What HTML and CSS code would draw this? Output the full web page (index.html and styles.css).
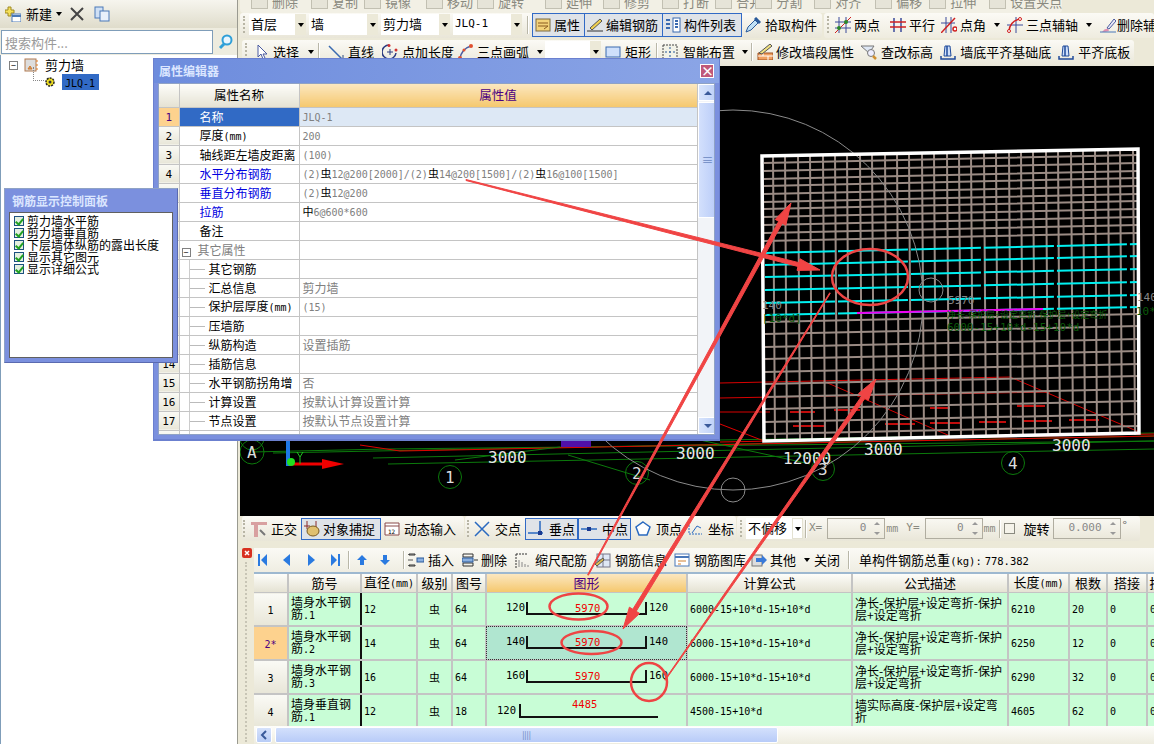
FILE: index.html
```html
<!DOCTYPE html>
<html lang="zh">
<head>
<meta charset="utf-8">
<title>属性编辑器</title>
<link rel="stylesheet" href="styles.css">
</head>
<body>
<div class="app">
  <aside class="left">
    <div class="ltool">
      <svg class="ic" viewBox="0 0 16 16"><path d="M3 1h3v3h3v3H6v3H3V7H0V4h3z" fill="#f5e05a" stroke="#a08a20"/><rect x="7" y="8" width="9" height="8" fill="#fff" stroke="#4a78b8"/><path d="M7 10h9" stroke="#4a78b8" stroke-width="2"/></svg>
      <span class="t new">新建</span><i class="ct"></i>
      <svg class="ic xx" viewBox="0 0 16 16"><path d="M2 2l12 12M14 2L2 14" stroke="#444" stroke-width="2"/></svg>
      <svg class="ic cp" viewBox="0 0 16 16"><rect x="1" y="1" width="8" height="11" fill="#cfe0f5" stroke="#4a78b8"/><rect x="6" y="5" width="9" height="10" fill="#e8f0fb" stroke="#4a78b8"/></svg>
    </div>
    <div class="lsearch">
      <div class="sbox">搜索构件...</div>
      <svg class="ic sico" viewBox="0 0 16 16"><circle cx="9" cy="6" r="4.5" fill="#e8f6ff" stroke="#2f9fd8" stroke-width="2"/><path d="M6 10l-4 4" stroke="#2f9fd8" stroke-width="3"/></svg>
    </div>
    <div class="tree">
      <div class="node">
        <span class="minus">−</span>
        <svg class="ic" viewBox="0 0 16 16"><rect x="1" y="2" width="11" height="12" fill="#ddd" stroke="#b07a50"/><path d="M4 12l2-3 2 3zM13 3v2M13 7v2M13 11v2" stroke="#e07a20" fill="#999"/></svg>
        <span class="nt">剪力墙</span>
      </div>
      <div class="node sub">
        <span class="conn"></span>
        <svg class="ic gear" viewBox="0 0 12 12"><circle cx="6" cy="6" r="4" fill="#f0e020" stroke="#222" stroke-width="1.5" stroke-dasharray="2 1"/><circle cx="6" cy="6" r="1.5" fill="#333"/></svg>
        <span class="sel"><span class="m">JLQ-1</span></span>
      </div>
    </div>
  </aside>

  <main class="right">
    <div class="r0">
      <div class="r0in">
        <span class="dt d1">删除</span><span class="dt d2">复制</span><span class="dt d3">镜像</span><span class="dt d4">移动</span><span class="dt d5">旋转</span><span class="dt d6">延伸</span><span class="dt d7">修剪</span><span class="dt d8">打断</span><span class="dt d9">合并</span><span class="dt d10">分割</span><span class="dt d11">对齐</span><span class="dt d12">偏移</span><span class="dt d13">拉伸</span><span class="dt d14">设置夹点</span>
      </div>
    </div>

    <div class="r1">
      <div class="tb tb1">
        <i class="gr"></i>
        <div class="cb w57">首层<b><i class="ct"></i></b></div>
        <div class="cb w69">墙<b><i class="ct"></i></b></div>
        <div class="cb w69">剪力墙<b><i class="ct"></i></b></div>
        <div class="cb w69"><span class="m big">JLQ-1</span><b><i class="ct"></i></b></div>
        <i class="sep s1"></i>
        <div class="on b1"><svg class="ic" viewBox="0 0 16 16"><rect x="1" y="2" width="14" height="12" fill="#f3d27a" stroke="#7a6a40"/><path d="M3 6h10M3 9h10M9 12l4-3" stroke="#8a5a20"/></svg><span class="t">属性</span></div>
        <div class="on b2"><svg class="ic" viewBox="0 0 16 16"><path d="M3 11L13 2l2 2L5 13z" fill="#f0d050" stroke="#555"/><path d="M0 14h16" stroke="#333"/></svg><span class="t">编辑钢筋</span></div>
        <div class="on b3"><svg class="ic" viewBox="0 0 16 16"><rect x="8" y="1" width="7" height="14" fill="#fff" stroke="#3a6ab0"/><path d="M10 4h3M10 7h3M10 10h3M1 3h4M1 7h4M1 11h4" stroke="#3a6ab0" stroke-width="2" fill="none"/></svg><span class="t">构件列表</span></div>
        <div class="it pick"><svg class="ic" viewBox="0 0 16 16"><path d="M1 15l2-5 7-7 3 3-7 7z" fill="#bfe0f5" stroke="#2a5a9a"/><path d="M10 1l5 5" stroke="#2a5a9a" stroke-width="3"/></svg><span class="t">拾取构件</span></div>
      </div>
      <div class="tb tb2">
        <i class="gr"></i>
        <div class="it it-a"><svg class="ic" viewBox="0 0 16 16"><path d="M4 0v16M11 0v16M0 5h16M0 11h16" stroke="#3a4a9a"/><path d="M0 16L16 0" stroke="#d02020"/><circle cx="11" cy="5" r="2" fill="#2a8a2a"/><circle cx="4" cy="11" r="2" fill="#2a8a2a"/></svg><span class="t">两点</span></div>
        <div class="it it-b"><svg class="ic" viewBox="0 0 16 16"><path d="M4 1v14M11 1v14" stroke="#3a4a9a" stroke-width="1.5"/><path d="M0 5h16M0 10h16" stroke="#d02020" stroke-width="1.5"/></svg><span class="t">平行</span></div>
        <div class="it it-c"><svg class="ic" viewBox="0 0 16 16"><path d="M5 0v16M10 0v16M0 6h14" stroke="#3a4a9a"/><path d="M0 16L14 1" stroke="#d02020" stroke-width="1.5"/><circle cx="14" cy="12" r="2" fill="#fff" stroke="#d02020" stroke-width="1.5"/></svg><span class="t">点角</span><i class="ct"></i></div>
        <div class="it it-d"><svg class="ic" viewBox="0 0 16 16"><path d="M9 0v16M0 8h16" stroke="#3a4a9a"/><path d="M2 14Q3 4 13 2" stroke="#d02020" fill="none" stroke-width="1.5"/><circle cx="2" cy="14" r="1.5" fill="#fff" stroke="#d02020"/><circle cx="13" cy="2" r="1.5" fill="#fff" stroke="#d02020"/></svg><span class="t">三点辅轴</span><i class="ct"></i></div>
        <div class="it it-e"><svg class="ic" viewBox="0 0 16 16"><path d="M7 11L14 2l2 2-7 8z" fill="#e8e8f5" stroke="#4a5aa0"/><path d="M2 15q3-4 6-3l1 2q-3 1-7 1z" fill="#e090b0"/><path d="M0 15h16" stroke="#4a78b8"/></svg><span class="t">删除辅轴</span></div>
      </div>
    </div>

    <div class="r2">
      <div class="tb tb3">
        <i class="gr"></i>
        <div class="it i-sel"><svg class="ic" viewBox="0 0 16 16"><path d="M5 1v12l3-3 2 5 2-1-2-4h4z" fill="#fff" stroke="#4a5aa0"/></svg><span class="t">选择</span><i class="ct ct5"></i></div>
        <i class="sep s2"></i>
        <div class="it"><svg class="ic" viewBox="0 0 16 16"><path d="M1 2l13 13" stroke="#3a6ab0" stroke-width="1.5"/><path d="M11 15h4v-4" stroke="#2a4a80" fill="none"/></svg><span class="t">直线</span></div>
        <div class="it i-8"><svg class="ic" viewBox="0 0 16 16"><path d="M7 1a7 7 0 1 0 7 8" stroke="#2a3a80" fill="none" stroke-width="1.5"/><path d="M5 8h6M8 5v6" stroke="#2a3a80"/><circle cx="14" cy="6" r="1.5" fill="#d03030"/><circle cx="7" cy="1.5" r="1.5" fill="#d03030"/></svg><span class="t">点加长度</span></div>
        <div class="it i-3"><svg class="ic" viewBox="0 0 16 16"><path d="M2 15Q3 5 13 2" stroke="#4a5aa0" fill="none" stroke-width="1.5"/><circle cx="2" cy="14" r="2" fill="#e05030"/><circle cx="6" cy="6" r="1.5" fill="#e05030"/><circle cx="13" cy="2" r="2" fill="#e05030"/></svg><span class="t">三点画弧</span><i class="ct ct5"></i></div>
        <div class="cb w56 cbw"><b><i class="ct"></i></b></div>
        <div class="it i-4"><svg class="ic" viewBox="0 0 16 16"><rect x="1" y="3" width="14" height="10" fill="#cfe0fb" stroke="#3a6ab0"/></svg><span class="t">矩形</span></div>
        <i class="sep s3"></i>
        <div class="it i-5 i-gap5"><svg class="ic" viewBox="0 0 16 16"><rect x="1" y="1" width="14" height="14" fill="#f2f2e8" stroke="#444" stroke-dasharray="2 1"/><path d="M8 3v10M3 8h10" stroke="#2a5a9a" stroke-dasharray="2 2"/></svg><span class="t">智能布置</span><i class="ct ct2"></i></div>
        <i class="sep s4"></i>
        <div class="it i-gap3"><svg class="ic" viewBox="0 0 16 16"><path d="M1 9h15v7H1z" fill="#f0a060" stroke="#a05020"/><path d="M1 12h15M6 9v3M11 12v4" stroke="#fff"/><path d="M2 9L13 0l2 2L5 10z" fill="#f0e080" stroke="#555"/></svg><span class="t">修改墙段属性</span></div>
        <div class="it i-7"><svg class="ic" viewBox="0 0 16 16"><path d="M0 2h13L8 9z" fill="#dfe8f5" stroke="#777"/><circle cx="10" cy="9" r="3.5" fill="#eef" stroke="#777"/><path d="M12 12l3 3" stroke="#d09030" stroke-width="2.5"/></svg><span class="t">查改标高</span></div>
        <div class="it i-7"><svg class="ic" viewBox="0 0 16 16"><path d="M5 2h5l1 10H4z" fill="#cfe0fb" stroke="#1f4a9a"/><path d="M7 2v10M1 12v3h14v-3" stroke="#1f4a9a" fill="none" stroke-width="1.5"/></svg><span class="t">墙底平齐基础底</span></div>
        <div class="it i-7"><svg class="ic" viewBox="0 0 16 16"><path d="M5 2h5l1 10H4z" fill="#cfe0fb" stroke="#1f4a9a"/><path d="M7 2v10M1 12v3h14v-3" stroke="#1f4a9a" fill="none" stroke-width="1.5"/></svg><span class="t">平齐底板</span></div>
      </div>
    </div>

    <div class="canvas">
      <svg class="cad" viewBox="240 66 914 450">
        <circle cx="733" cy="490" r="12" fill="none" stroke="#8a8a8a"/>
        <path d="M252 452L385 449L1154 441M273 453L1154 436M373 458L1154 441M388 464L1154 449M720 440L1154 433" stroke="#0c7a0c" fill="none"/>
        <path d="M360 445L400 451L1154 436M720 424L764 441M720 442L1154 434" stroke="#e00000" fill="none"/>
        <path d="M560 447L455 460M568 455L650 480M700 440L810 464" stroke="#0c7a0c" fill="none" />
        <rect x="561" y="440" width="30" height="7" fill="#5010a8"/>
        <g fill="none" stroke="#0c7a0c">
          <circle cx="450" cy="477" r="11.5"/><circle cx="637" cy="473" r="11.5"/><circle cx="823" cy="469" r="11.5"/><circle cx="1013" cy="463" r="11.5"/><circle cx="252" cy="452" r="12"/><circle cx="252" cy="438" r="12"/>
        </g>
        <g class="ax">
          <text x="445" y="483">1</text><text x="632" y="479">2</text><text x="818" y="475">3</text><text x="1008" y="469">4</text><text x="247" y="458">A</text>
        </g>
        <g class="dim">
          <text x="488" y="463">3000</text><text x="676" y="459">3000</text><text x="783" y="464">12000</text><text x="864" y="455">3000</text><text x="1052" y="451">3000</text>
        </g>
        <path d="M288 440v26" stroke="#1e78e8" stroke-width="4"/>
        <path d="M290 464h35" stroke="#f00000" stroke-width="3"/>
        <path d="M322 459l22 5-22 5z" fill="#f00000"/>
        <circle cx="291" cy="462" r="4" fill="#20e020"/>
        <path d="M297 452l3 5 3-5M300 457v7" stroke="#20c020" fill="none"/>
        <path d="M720 383L1010 377L1139 432M720 398L1050 392M823 381L950 436M720 412L770 412" stroke="#d80000" fill="none"/>
        <path d="M790 412h25M834 410h26M930 408h20M1017 406h28M793 426h32M885 424h30M930 423h30M979 422h27M1023 421h29M1069 420h30" stroke="#ff1010" stroke-width="1.5"/>
        <path class="gv" d="M773 155l2 285M785 155l2 285M798 155l2 285M810 155l2 285M823 155l2 285M835 154l2 285M847 154l2 285M860 154l2 285M872 154l2 285M885 154l2 285M897 153l2 285M909 153l2 285M922 153l2 285M934 153l2 285M947 153l2 285M959 152l2 285M971 152l2 285M984 152l2 285M996 152l2 285M1009 152l2 285M1021 151l2 285M1033 151l2 285M1046 151l2 285M1058 151l2 285M1071 151l2 285M1083 150l2 285M1095 150l2 285M1108 150l2 285M1120 150l2 285M1133 150l2 285"/>
        <path class="gv" d="M764 163l374-8M764 171l374-8M764 179l374-8M764 186l374-8M764 194l374-8M764 202l374-8M764 209l374-8M764 217l374-8M764 225l374-8M764 233l374-8M764 241l374-8M765 322l374-8M765 334l374-8M765 347l374-8M765 359l374-8M765 372l374-8M765 384l374-8M765 397l374-8M765 409l374-8M765 422l374-8M765 434l374-8"/>
        <path d="M765 253l374-9M765 265l374-9M765 277l374-8M765 290l374-8M765 303l374-8M765 315l374-8" stroke="#00f0f0" stroke-width="2" stroke-dasharray="70 3" fill="none"/>
        <path d="M857 313l186-4" stroke="#f000f0" stroke-width="2"/>
        <circle cx="733" cy="300" r="190" fill="none" stroke="#8a8a8a"/>
        <circle cx="931" cy="290" r="12" fill="none" stroke="#8a8a8a"/>
        <path d="M762 156L1138 149L1139 433L764 441Z" fill="none" stroke="#fff" stroke-width="3.5"/>
        <g class="note">
          <text x="948" y="304" fill="#888">5970</text>
          <text x="762" y="309" fill="#888">140</text>
          <text x="1137" y="301" fill="#888">140</text>
          <text x="762" y="322" fill="#0a5a0a">[10*d]</text>
          <text x="1136" y="315" fill="#0a5a0a">10*</text>
          <text x="947" y="331" fill="#0a5a0a">6000-15+10*d-15+10*d</text>
        </g>
        <text class="note cn" x="947" y="318">净长-保护层+设定弯折-保护层+设定弯折</text>
      </svg>
    </div>

    <div class="r3">
      <div class="tb tb4">
        <i class="gr"></i>
        <div class="it"><svg class="ic" viewBox="0 0 16 16"><path d="M0 1h16v3H7v12H3V4H0z" fill="#d8a0a0"/><path d="M9 9l5 5" stroke="#777" stroke-width="2"/></svg><span class="t">正交</span></div>
        <div class="on b4"><svg class="ic" viewBox="0 0 16 16"><path d="M3 0v8M12 0v8M0 5h6" stroke="#8a2a2a"/><ellipse cx="9" cy="10" rx="6" ry="5" fill="#e0c070" stroke="#7a5a20"/></svg><span class="t">对象捕捉</span></div>
        <div class="it it-dy"><svg class="ic" viewBox="0 0 16 16"><path d="M1 2h14v3H1zM1 5v9h14V5" fill="#fff" stroke="#8a4a4a"/><text class="ict" x="4" y="13">12</text></svg><span class="t">动态输入</span></div>
      </div>
      <div class="tb tb5">
        <i class="gr"></i>
        <div class="it"><svg class="ic" viewBox="0 0 16 16"><path d="M1 1l14 14M15 1L1 15" stroke="#2a6ac0" stroke-width="1.5"/></svg><span class="t">交点</span></div>
        <div class="on b5"><svg class="ic" viewBox="0 0 16 16"><path d="M0 12h15M12 0v12" stroke="#2a6ac0" stroke-width="1.5"/><rect x="10" y="10" width="4" height="4" fill="#1a3a90"/></svg><span class="t">垂点</span></div>
        <div class="on b5"><svg class="ic" viewBox="0 0 16 16"><path d="M0 8h16" stroke="#2a6ac0" stroke-width="1.5"/><rect x="6" y="6" width="4" height="4" fill="#1a3a90"/></svg><span class="t">中点</span></div>
        <div class="it"><svg class="ic" viewBox="0 0 16 16"><path d="M8 1l7 5-3 8H4L1 6z" fill="#fff" stroke="#2a6ac0" stroke-width="1.5"/></svg><span class="t">顶点</span></div>
        <div class="it"><svg class="ic" viewBox="0 0 16 16"><path d="M2 1v12h13" stroke="#2a6ac0" fill="none" stroke-dasharray="2 1"/><path d="M5 12l5-7 4 2" stroke="#2a6ac0" fill="none"/></svg><span class="t">坐标</span></div>
      </div>
      <div class="tb tb6">
        <i class="gr"></i>
        <div class="cb w57">不偏移<b class="lite"><i class="ct"></i></b></div>
        <i class="sep s5"></i>
        <span class="lbl m">X=</span><div class="sp w58"><span class="m">0</span></div><span class="lbl m u">mm</span>
        <span class="lbl m ly">Y=</span><div class="sp w58"><span class="m">0</span></div><span class="lbl m u">mm</span>
        <i class="sep s6"></i>
        <i class="chk"></i>
        <span class="t rot">旋转</span>
        <div class="sp w68"><span class="m">0.000</span></div>
        <span class="deg">°</span>
      </div>
    </div>

    <div class="low">
      <div class="gut"><svg class="ic cls" viewBox="0 0 10 10"><rect width="10" height="10" rx="2" fill="#d83020"/><path d="M3 3l4 4M7 3L3 7" stroke="#fff" stroke-width="1.5"/></svg><i class="gr gr2"></i></div>
      <div class="lm">
        <div class="tbar">
          <svg class="nav n1" viewBox="0 0 10 12"><path d="M0 0h2v12H0zM9 0v12L3 6z" fill="#2a7ae0"/></svg>
          <svg class="nav n2" viewBox="0 0 10 12"><path d="M8 0v12L1 6z" fill="#2a7ae0"/></svg>
          <svg class="nav n2" viewBox="0 0 10 12"><path d="M2 0v12l7-6z" fill="#2a7ae0"/></svg>
          <svg class="nav n2" viewBox="0 0 10 12"><path d="M10 0H8v12h2zM1 0v12l6-6z" fill="#2a7ae0"/></svg>
          <i class="sep s7"></i>
          <svg class="nav n3" viewBox="0 0 10 10"><path d="M5 0l5 5H7v5H3V5H0z" fill="#2a7ae0"/></svg>
          <svg class="nav n4" viewBox="0 0 10 10"><path d="M5 10l5-5H7V0H3v5H0z" fill="#2a7ae0"/></svg>
          <i class="sep s8"></i>
          <div class="it i-ins"><svg class="ic" viewBox="0 0 16 16"><path d="M1 2h6v1H1zM1 13h6v1H1zM1 2v1M1 13v1" stroke="#333" fill="none"/><path d="M0 8h5" stroke="#555"/><rect x="9" y="6" width="7" height="4" fill="#8ab0e0" stroke="#2a5a9a"/></svg><span class="t">插入</span></div>
          <div class="it i-7b"><svg class="ic" viewBox="0 0 16 16"><path d="M1 2h10v3H1zM1 11h10v3H1z" fill="none" stroke="#333"/><rect x="0" y="6" width="11" height="4" fill="#8ab0e0" stroke="#2a5a9a"/><path d="M12 8h4" stroke="#333"/></svg><span class="t">删除</span></div>
          <div class="it i-8"><svg class="ic" viewBox="0 0 16 16"><path d="M1 2v14M1 2h12" stroke="#333" stroke-dasharray="2 1" fill="none"/><path d="M4 8v7M7 10v5M10 12v3M13 13v2" stroke="#888"/></svg><span class="t">缩尺配筋</span></div>
          <div class="it i-8"><svg class="ic" viewBox="0 0 16 16"><rect x="2" y="2" width="13" height="13" fill="#dfe8f5" stroke="#778"/><path d="M2 8h13M8 2v13" stroke="#778"/><path d="M0 12L8 6l1 2-7 6z" fill="#e0c050" stroke="#555"/></svg><span class="t">钢筋信息</span></div>
          <div class="it i-7"><svg class="ic" viewBox="0 0 16 16"><rect x="1" y="2" width="14" height="12" fill="#fff" stroke="#4a78b8"/><path d="M1 5h14" stroke="#4a78b8" stroke-width="2"/><path d="M4 9h8M4 12h3" stroke="#d08030"/></svg><span class="t">钢筋图库</span></div>
          <div class="it i-10"><svg class="ic" viewBox="0 0 16 16"><rect x="1" y="3" width="10" height="11" fill="#ddd" stroke="#777"/><path d="M5 6h6V3l5 5-5 5v-3H5z" fill="#3a7ad8"/></svg><span class="t">其他</span><i class="ct ct5"></i></div>
          <span class="t cl">关闭</span>
          <i class="sep s9"></i>
          <span class="t tot">单构件钢筋总重<span class="m">(kg):</span> <span class="m">778.382</span></span>
        </div>
        <div class="tw">
          <table class="grid">
            <colgroup><col class="c0"><col class="c1"><col class="c2"><col class="c3"><col class="c4"><col class="c5"><col class="c6"><col class="c7"><col class="c8"><col class="c9"><col class="c10"><col class="c11"></colgroup>
            <thead><tr><th></th><th>筋号</th><th>直径<span class="m">(mm)</span></th><th>级别</th><th>图号</th><th class="hot">图形</th><th>计算公式</th><th>公式描述</th><th>长度<span class="m">(mm)</span></th><th>根数</th><th>搭接</th><th>损耗</th></tr></thead>
            <tbody>
              <tr><th><span class="m">1</span></th><td class="bl">墙身水平钢筋<span class="m">.1</span></td><td><span class="m">12</span></td><td class="ctr">虫</td><td><span class="m">64</span></td><td class="fig"><svg viewBox="0 0 200 32"><text x="19" y="18">120</text><path d="M40 9v12h119V9" class="hk"/><text class="rd" x="88" y="19">5970</text><text x="162" y="18">120</text></svg></td><td><span class="m">6000-15+10*d-15+10*d</span></td><td class="ds">净长-保护层+设定弯折-保护层+设定弯折</td><td><span class="m">6210</span></td><td><span class="m">20</span></td><td><span class="m">0</span></td><td><span class="m">0</span></td></tr>
              <tr><th class="cur"><span class="m">2*</span></th><td class="bl">墙身水平钢筋<span class="m">.2</span></td><td><span class="m">14</span></td><td class="ctr">虫</td><td><span class="m">64</span></td><td class="fig act"><svg viewBox="0 0 200 32"><text x="19" y="18">140</text><path d="M40 9v12h119V9" class="hk"/><text class="rd" x="88" y="19">5970</text><text x="162" y="18">140</text></svg></td><td><span class="m">6000-15+10*d-15+10*d</span></td><td class="ds">净长-保护层+设定弯折-保护层+设定弯折</td><td><span class="m">6250</span></td><td><span class="m">12</span></td><td><span class="m">0</span></td><td><span class="m">0</span></td></tr>
              <tr><th><span class="m">3</span></th><td class="bl">墙身水平钢筋<span class="m">.3</span></td><td><span class="m">16</span></td><td class="ctr">虫</td><td><span class="m">64</span></td><td class="fig"><svg viewBox="0 0 200 32"><text x="19" y="18">160</text><path d="M40 9v12h119V9" class="hk"/><text class="rd" x="88" y="19">5970</text><text x="162" y="18">160</text></svg></td><td><span class="m">6000-15+10*d-15+10*d</span></td><td class="ds">净长-保护层+设定弯折-保护层+设定弯折</td><td><span class="m">6290</span></td><td><span class="m">32</span></td><td><span class="m">0</span></td><td><span class="m">0</span></td></tr>
              <tr><th><span class="m">4</span></th><td class="bl">墙身垂直钢筋<span class="m">.1</span></td><td><span class="m">12</span></td><td class="ctr">虫</td><td><span class="m">18</span></td><td class="fig"><svg viewBox="0 0 200 32"><text x="10" y="19">120</text><path d="M33 9v13h138" class="hk"/><text class="rd" x="85" y="13">4485</text></svg></td><td><span class="m">4500-15+10*d</span></td><td class="ds">墙实际高度-保护层+设定弯折</td><td><span class="m">4605</span></td><td><span class="m">62</span></td><td><span class="m">0</span></td><td><span class="m">0</span></td></tr>
            </tbody>
          </table>
        </div>
        <div class="hs">
          <div class="hb"><svg viewBox="0 0 8 10" class="hba"><path d="M6 1L2 5l4 4" stroke="#3a5a9a" stroke-width="2" fill="none"/></svg></div>
          <div class="hth"><span class="hgr">||||</span></div>
        </div>
      </div>
    </div>
  </main>
</div>

<section class="prop">
  <div class="wt"><span>属性编辑器</span><em class="wx">×</em></div>
  <div class="pb">
    <table class="pg">
      <colgroup><col class="p0"><col class="p1"><col class="p2"></colgroup>
      <thead><tr><th></th><th>属性名称</th><th class="hot">属性值</th></tr></thead>
      <tbody>
        <tr><th class="cur"><span class="m pur">1</span></th><td class="nm selc">名称</td><td class="v lb"><span class="m">JLQ-1</span></td></tr>
        <tr><th><span class="m">2</span></th><td class="nm">厚度<span class="m">(mm)</span></td><td class="v"><span class="m">200</span></td></tr>
        <tr><th><span class="m">3</span></th><td class="nm">轴线距左墙皮距离</td><td class="v"><span class="m">(100)</span></td></tr>
        <tr><th><span class="m">4</span></th><td class="nm bl2">水平分布钢筋</td><td class="v"><span class="m">(2)</span><span class="sym">虫</span><span class="m">12@200[2000]/(2)</span><span class="sym">虫</span><span class="m">14@200[1500]/(2)</span><span class="sym">虫</span><span class="m">16@100[1500]</span></td></tr>
        <tr><th><span class="m">5</span></th><td class="nm bl2">垂直分布钢筋</td><td class="v"><span class="m">(2)</span><span class="sym">虫</span><span class="m">12@200</span></td></tr>
        <tr><th><span class="m">6</span></th><td class="nm bl2">拉筋</td><td class="v"><span class="sym">中</span><span class="m">6@600*600</span></td></tr>
        <tr><th><span class="m">7</span></th><td class="nm">备注</td><td class="v"></td></tr>
        <tr><th><span class="m">8</span></th><td class="grpn"><span class="minus">−</span><span>其它属性</span></td><td class="v"></td></tr>
        <tr><th><span class="m">9</span></th><td class="sb">其它钢筋</td><td class="v"></td></tr>
        <tr><th><span class="m">10</span></th><td class="sb">汇总信息</td><td class="v">剪力墙</td></tr>
        <tr><th><span class="m">11</span></th><td class="sb">保护层厚度<span class="m">(mm)</span></td><td class="v"><span class="m">(15)</span></td></tr>
        <tr><th><span class="m">12</span></th><td class="sb">压墙筋</td><td class="v"></td></tr>
        <tr><th><span class="m">13</span></th><td class="sb">纵筋构造</td><td class="v">设置插筋</td></tr>
        <tr><th><span class="m">14</span></th><td class="sb">插筋信息</td><td class="v"></td></tr>
        <tr><th><span class="m">15</span></th><td class="sb">水平钢筋拐角增</td><td class="v">否</td></tr>
        <tr><th><span class="m">16</span></th><td class="sb">计算设置</td><td class="v">按默认计算设置计算</td></tr>
        <tr><th><span class="m">17</span></th><td class="sb">节点设置</td><td class="v">按默认节点设置计算</td></tr>
        <tr><th><span class="m">18</span></th><td class="sb">搭接设置</td><td class="v">按默认搭接设置计算</td></tr>
      </tbody>
    </table>
    <div class="vs">
      <div class="vb"><i class="up"></i></div>
      <div class="vt"><div class="vth"><span>≡</span></div></div>
      <div class="vb"><i class="dn"></i></div>
    </div>
  </div>
</section>

<section class="panel">
  <div class="pt">钢筋显示控制面板</div>
  <div class="pl">
    <label class="row"><i class="ck"></i>剪力墙水平筋</label>
    <label class="row"><i class="ck"></i>剪力墙垂直筋</label>
    <label class="row"><i class="ck"></i>下层墙体纵筋的露出长度</label>
    <label class="row"><i class="ck"></i>显示其它图元</label>
    <label class="row"><i class="ck"></i>显示详细公式</label>
  </div>
</section>

<svg class="marks" viewBox="0 0 1154 744">
  <g class="ann">
    <polygon points="466,179.5 799,262.7 800,258.8 820,270 797,270.4 798,266.5 466,180.5"/>
    <polygon points="587.6,574.8 778.7,221.3 775.2,219.4 791,203 785.8,225.2 782.2,223.3 588.4,575.2"/>
    <polygon points="829.7,292.8 632.8,609.2 629.4,607.2 623,629 639.6,613.4 636.2,611.3 830.3,293.2"/>
    <polygon points="664.7,679.8 861.8,395.9 858.5,393.6 876,379 868.3,400.4 865,398.2 665.3,680.2"/>
  </g>
  <g class="ell">
    <ellipse cx="870" cy="277" rx="38" ry="28"/>
    <ellipse cx="578.5" cy="606.5" rx="29" ry="13"/>
    <ellipse cx="591.5" cy="642.5" rx="30" ry="11.5"/>
    <ellipse cx="649" cy="682" rx="18" ry="19"/>
  </g>
</svg>
</body>
</html>
```

FILE: styles.css
```css
* { box-sizing: border-box; }
html, body { margin: 0; padding: 0; }
body {
  width: 1154px; height: 744px; overflow: hidden; position: relative;
  font: 12px/1.1 "Noto Sans CJK SC", "Liberation Sans", sans-serif; color: #000;
  background: #ece9d8;
}
.app { display: flex; width: 1154px; height: 744px; }
.m { font-family: "DejaVu Sans Mono", monospace; font-size: 10px; }
.m.big { font-size: 11px; }
.t { font-size: 13px; white-space: nowrap; line-height: 16px; }
.ic { width: 16px; height: 16px; flex: none; display: block; }
i { display: block; flex: none; }
.ct { width: 0; height: 0; border: 3px solid transparent; border-top: 4px solid #000; border-bottom: 0; }
.gr { width: 3px; height: 17px; border-left: 2px dotted #b8b5a5; }
.sep { width: 1px; height: 18px; background: #b9b7a8; border-right: 1px solid #fff; box-sizing: content-box; }

/* left */
.left { width: 238px; flex: none; display: flex; flex-direction: column; border-right: 1px solid #9a9a90; }
.ltool { height: 28px; display: flex; align-items: center; padding-left: 5px; background: linear-gradient(#f6f5ee, #dfdccb); }
.new { margin-left: 5px; margin-right: 4px; }
.xx { margin-left: 7px; }
.cp { margin-left: 9px; }
.lsearch { height: 27px; display: flex; align-items: center; padding-left: 1px; background: #eeecdf; }
.sbox { width: 212px; height: 24px; padding: 4px 3px; border: 1px solid #7f9db9; background: #fff; color: #9a9a9a; font-size: 13px; line-height: 16px; }
.sico { margin-left: 5px; }
.tree { flex: 1; background: #fff; border-left: 1px solid #7f9db9; padding: 2px 0 0 8px; }
.node { display: flex; align-items: center; height: 16px; gap: 6px; }
.minus { display: flex; align-items: center; justify-content: center; width: 9px; height: 9px; border: 1px solid #808080; font-size: 9px; line-height: 7px; background: #fff; flex: none; }
.nt { font-size: 13px; margin-left: -1px; }
.sub { position: relative; padding-left: 35px; height: 17px; gap: 6px; }
.conn { position: absolute; left: 24px; top: -6px; width: 11px; height: 14px; border-left: 1px dotted #888; border-bottom: 1px dotted #888; }
.gear { width: 12px; height: 12px; }
.sel { background: #316ac5; padding: 0 3px; width: 37px; height: 16px; line-height: 16px; white-space: nowrap; }
.sel .m { font-size: 10px; }

/* right */
.right { flex: 1; min-width: 0; margin-left: 2px; display: flex; flex-direction: column; }
.r0 { height: 13px; overflow: hidden; }
.r0in { height: 13px; width: 822px; background: #f2f0e5; border-radius: 0 0 4px 4px; display: flex; color: #8a8a80; }
.dt { font-size: 13px; line-height: 13px; margin-top: -5px; white-space: nowrap; position: relative; }
.dt::before { content: ""; position: absolute; left: -21px; top: 2px; width: 15px; height: 10px; border: 1px solid #c2c0b2; background: #e6e4d8; }
.d1 { margin-left: 32px; } .d2 { margin-left: 34px; } .d3 { margin-left: 27px; } .d4 { margin-left: 36px; } .d5 { margin-left: 25px; }
.d6 { margin-left: 42px; } .d7 { margin-left: 32px; } .d8 { margin-left: 33px; } .d9 { margin-left: 27px; } .d10 { margin-left: 14px; }
.d11 { margin-left: 33px; } .d12 { margin-left: 35px; } .d13 { margin-left: 28px; } .d14 { margin-left: 34px; }
.r1 { height: 25px; margin-top: 0; display: flex; }
.r2 { height: 26px; margin-top: 2px; }
.tb { display: flex; align-items: center; background: linear-gradient(#fbfaf5, #e9e6d8); border-radius: 3px; height: 100%; }
.tb1 { width: 582px; padding-left: 3px; padding-bottom: 2px; }
.tb2 { margin-left: 2px; flex: 1; min-width: 0; overflow: hidden; padding-left: 3px; padding-bottom: 2px; background: linear-gradient(#fbfaf5, #efecdf); }
.tb3 { width: 892px; margin-left: 2px; padding-left: 3px; padding-bottom: 3px; }
.it { display: flex; align-items: center; gap: 4px; margin-left: 8px; flex: none; }
.it .ct { margin-left: 5px; }
.it .ct5 { margin-left: 5px; margin-right: 0; }
.it .ct2 { margin-left: 2px; }
.cb { display: flex; align-items: center; justify-content: space-between; height: 21px; background: #fff; font-size: 13px; padding-left: 2px; margin-left: 3px; flex: none; }
.cb b { display: flex; align-items: center; justify-content: center; width: 11px; height: 100%; background: #ece9d8; }
.cb b.lite { background: #fff; border: 1px solid #e4e2d2; }
.tb1 > .cb:first-of-type { margin-left: 3px; }
.w57 { width: 57px; } .w69 { width: 69px; } .w56 { width: 56px; }
.cbw { margin-left: 2px; justify-content: flex-end; }
.s1 { margin: 0 3px 0 5px; }
.on { display: flex; align-items: center; gap: 3px; height: 24px; background: #dfe3e8; border: 1px solid #316ac5; padding-left: 2px; flex: none; }
.b1 { width: 53px; } .b2 { width: 79px; margin-left: -1px; } .b3 { width: 80px; margin-left: -1px; }
.pick { margin-left: 3px; }
.it-a { margin-left: 5px; gap: 3px; } .it-b { gap: 3px; margin-left: 10px; } .it-c { gap: 3px; margin-left: 6px; } .it-d { margin-left: 7px; gap: 3px; } .it-e { margin-left: 8px; gap: 1px; }
.i-sel { margin-left: 5px; }
.s2 { margin-left: 4px; } .i-3 { gap: 3px; margin-left: 4px; }
.i-4 { margin-left: 4px; } .s3 { margin-left: 5px; } .i-5 { margin-left: 4px; } .i-gap5 { gap: 5px; }
.s4 { margin-left: 3px; } .i-gap3 { gap: 3px; margin-left: 4px; } .i-7 { margin-left: 7px; }
.i-8 { margin-left: 8px; }

.canvas { height: 450px; background: #000; flex: none; }
.cad { display: block; width: 914px; height: 450px; }
.cad text { font-family: "DejaVu Sans Mono", monospace; }
.ax text { font-size: 16px; fill: #ddd; }
.dim text { font-size: 16px; fill: #e8e8e8; }
.gv { stroke: #9a8b84; stroke-width: 2; fill: none; }
.note text, text.note { font-size: 11px; }
.note.cn { font-family: "Noto Sans CJK SC", sans-serif; font-size: 9px; fill: #0a5a0a; }

.r3 { height: 32px; display: flex; padding-top: 0; flex: none; }
.r3 .tb { height: 25px; }
.tb4 { width: 222px; margin-left: 2px; padding-left: 1px; }
.tb4 > .it:first-of-type { margin-left: 5px; gap: 4px; }
.b4 { width: 80px; margin-left: 4px; height: 22px; }
.it-dy { margin-left: 3px; }
.ict { font: 6px "DejaVu Sans Mono", monospace; }
.tb5 { width: 271px; margin-left: 1px; padding-left: 2px; }
.tb5 > .it:first-of-type { margin-left: 4px; gap: 5px; }
.b5 { width: 53px; height: 22px; gap: 5px; margin-left: 4px; }
.b5 + .b5 { margin-left: 0; }
.tb5 .it { gap: 5px; margin-left: 4px; }
.tb5 .it:last-of-type { margin-left: 5px; }
.tb6 { width: 403px; margin-left: 1px; padding-left: 3px; }
.s5 { margin: 0 2px 0 2px; }
.lbl { color: #8a8a80; font-size: 11px; }
.u { margin-left: 1px; font-size: 10px; }
.ly { margin-left: 8px; }
.sp { height: 21px; border: 1px solid #b0ada0; display: flex; align-items: center; justify-content: flex-end; padding-right: 18px; color: #888; margin-left: 5px; position: relative; }
.sp .m { font-size: 11px; }
.sp::before, .sp::after { content: ""; position: absolute; right: 4px; border: 3px solid transparent; }
.sp::before { top: 3px; border-top: 0; border-bottom: 3px solid #999; }
.sp::after { bottom: 3px; border-bottom: 0; border-top: 3px solid #999; }
.w58 { width: 58px; } .w68 { width: 68px; }
.s6 { margin: 0 3px 0 3px; }
.chk { width: 11px; height: 11px; border: 1px solid #8a8a80; background: #f5f3ea; }
.rot { margin-left: 9px; margin-right: -2px; }
.deg { margin-left: 2px; color: #666; align-self: flex-start; margin-top: 2px; }

.low { flex: 1; min-height: 0; display: flex; }
.gut { width: 14px; flex: none; position: relative; padding-top: 14px; padding-left: 5px; }
.cls { position: absolute; left: 2px; top: 0; width: 10px; height: 10px; }
.gr2 { height: 180px; width: 2px; border-left: 2px dotted #c8c5b5; }
.lm { flex: 1; min-width: 0; display: flex; flex-direction: column; }
.tbar { height: 24px; display: flex; align-items: center; padding-left: 4px; background: linear-gradient(#fbfaf5, #efede2); flex: none; }
.nav { height: 12px; width: 10px; flex: none; display: block; }
.n2 { margin-left: 14px; }
.n3 { margin-left: 0; height: 10px; } .n4 { margin-left: 13px; height: 10px; }
.s7 { margin: 0 7px 0 8px; } .s8 { margin: 0 3px 0 13px; }
.i-ins { margin-left: 0; } .i-7b { margin-left: 8px; gap: 3px; }
.i-10 { margin-left: 5px; gap: 3px; }
.cl { margin-left: 4px; }
.s9 { margin: 0 9px 0 8px; }
.tot .m { font-size: 10.5px; }
.tw { height: 154px; overflow: hidden; border-top: 2px solid #9db8d0; flex: none; }
.grid { border-collapse: collapse; table-layout: fixed; width: 924px; background: #c8fdd6; }
.c0 { width: 34px; } .c1 { width: 73px; } .c2 { width: 56px; } .c3 { width: 35px; } .c4 { width: 34px; } .c5 { width: 201px; }
.c6 { width: 165px; } .c7 { width: 156px; } .c8 { width: 61px; } .c9 { width: 38px; } .c10 { width: 40px; } .c11 { width: 31px; }
.grid thead th { height: 18px; font-size: 13px; line-height: 16px; font-weight: 400; background: linear-gradient(#fdfdfa, #e5e2d3); border: 1px solid #c4c4c4; border-width: 0 2px 1px 0; padding: 0; white-space: nowrap; overflow: hidden; }
.grid thead th.hot, .pg thead th.hot { background: linear-gradient(#fbe7c0, #f5c86e); color: #4b0082; }
.grid tbody th { font-weight: 400; background: linear-gradient(#fafaf5, #e8e6d8); border: 1px solid #c4c4c4; border-width: 0 2px 2px 0; text-align: center; padding: 0; height: 33px; }
.grid tbody th.cur, .pg tbody th.cur { background: #fdd28e; color: #4b0082; }
.grid td { border: 1px solid #c4c4c4; border-width: 0 2px 2px 0; padding: 0 2px; height: 33px; line-height: 12px; overflow: hidden; vertical-align: middle; }
.grid td.bl { border-right: 2px solid #111; font-size: 12px; }
.grid .ctr { text-align: center; font-size: 11px; }
.grid .ds { font-size: 12px; }
.fig { padding: 0 !important; }
.fig svg { display: block; width: 200px; height: 32px; }
.fig text { font: 10.5px "DejaVu Sans Mono", monospace; }
.fig .rd { fill: #f00000; }
.hk { fill: none; stroke: #111; stroke-width: 2; }
.grid td.act { background: #b0e6d0; outline: 1px dotted #333; outline-offset: -1px; }
.hs { height: 18px; display: flex; align-items: center; padding-left: 2px; gap: 3px; background: linear-gradient(#fdfdfa, #eeecdf); flex: none; }
.hb { width: 16px; height: 16px; background: linear-gradient(#d6e2fb, #b8ccf6); border: 1px solid #fff; border-radius: 2px; display: flex; align-items: center; justify-content: center; }
.hba { width: 8px; height: 10px; }
.hth { width: 503px; height: 16px; background: linear-gradient(#d3e0fc, #b8cbf8); border: 1px solid #fff; border-radius: 2px; display: flex; align-items: center; justify-content: center; color: #5a7ab8; font-size: 8px; }
.hgr { letter-spacing: 0; }

/* floating property window */
.prop { position: absolute; left: 153px; top: 58px; width: 567px; height: 383px; background: #7b90de; border: 1px solid #6b80cf; border-bottom-width: 2px; padding: 0 4px 4px; display: flex; flex-direction: column; }
.wt { height: 24px; display: flex; align-items: center; justify-content: space-between; color: #dbe6ff; font-weight: 700; font-size: 12px; flex: none; background: linear-gradient(90deg, #6d8cdd, #8ba5e6); margin: 0 -4px; padding: 0 4px 0 5px; }
.wx { font-style: normal; width: 14px; height: 14px; background: #c0597a; border: 1px solid #fff; color: #fff; font-size: 13px; line-height: 11px; text-align: center; font-weight: 700; margin-right: 1px; }
.pb { flex: 1; min-height: 0; display: flex; background: #fff; overflow: hidden; border: 1px solid #8fa2c5; }
.pg { border-collapse: collapse; table-layout: fixed; width: 538px; height: max-content; background: #fff; flex: none; }
.p0 { width: 20px; } .p1 { width: 120px; } .p2 { width: 398px; }
.pg thead th { height: 23px; font-size: 12.5px; line-height: 16px; font-weight: 400; background: linear-gradient(#fdfdfa, #e5e2d3); border: 1px solid #c4c4c4; border-width: 0 1px 1px 0; padding: 0; }
.pg tbody th { height: 19px; line-height: 14px; font-weight: 400; padding: 0; background: linear-gradient(#fafaf5, #e8e6d8); border: 1px solid #c4c4c4; border-width: 0 1px 1px 0; text-align: center; }
.pg tbody th .m { font-size: 11px; }
.pg td { height: 19px; padding: 0; border: 1px solid #c4c4c4; border-width: 0 1px 1px 0; white-space: nowrap; overflow: hidden; line-height: 14px; }
.nm { padding-left: 20px !important; font-size: 12px; }
.selc { background: #316ac5; color: #fff; }
.bl2 { color: #0000e0; }
.v { color: #808080; padding-left: 3px !important; }
.v .m { font-size: 10px; }
.lb { background: #dde8f5; }
.sym { color: #000; font-size: 11px; }
.pg td.grpn { color: #808080; padding-left: 2px; }
.grpn .minus { display: inline-flex; margin-right: 7px; color: #000; vertical-align: -1px; }
.sb { padding-left: 29px !important; position: relative; }
.sb::before { content: ""; position: absolute; left: 9px; top: 9px; width: 16px; border-top: 1px solid #bbb; }
.sb::after { content: ""; position: absolute; left: 9px; top: 0; height: 100%; border-left: 1px solid #ccc; }
.vs { width: 20px; flex: none; display: flex; flex-direction: column; background: #f2f4f8; }
.vb { height: 17px; background: linear-gradient(90deg, #d8e4fc, #bccff8); border: 1px solid #fff; display: flex; align-items: center; justify-content: center; flex: none; }
.up { border: 4px solid transparent; border-bottom: 4px solid #3a5a9a; border-top: 0; }
.dn { border: 4px solid transparent; border-top: 4px solid #3a5a9a; border-bottom: 0; }
.vt { flex: 1; }
.vth { margin-top: 1px; height: 116px; background: linear-gradient(90deg, #d3e0fc, #b8cbf8); border: 1px solid #fff; display: flex; align-items: center; justify-content: center; color: #6a88c0; }

/* floating panel */
.panel { position: absolute; left: 4px; top: 188px; width: 174px; height: 175px; background: #7b90de; border: 1px solid #8fa2c5; border-right-color: #5a6ab0; border-bottom-color: #5a6ab0; padding: 0 4px 4px; display: flex; flex-direction: column; }
.pt { height: 23px; line-height: 24px; font-weight: 700; color: #dbe6ff; font-size: 12px; padding-left: 3px; flex: none; }
.pl { flex: 1; background: #fff; border: 1px solid #606060; padding: 2px 0 0 4px; }
.row { display: flex; align-items: center; gap: 3px; height: 12px; font-size: 12px; line-height: 12px; white-space: nowrap; }
.ck { width: 10px; height: 10px; border: 1px solid #1c5180; background: #e4f0e0; position: relative; }
.ck::after { content: ""; position: absolute; left: 2px; top: 0; width: 3px; height: 6px; border: solid #21a121; border-width: 0 2px 2px 0; transform: rotate(40deg); }

/* annotations */
.marks { position: absolute; left: 0; top: 0; width: 1154px; height: 744px; pointer-events: none; }
.ann polygon { fill: #f04444; stroke: #f04444; stroke-width: 1; }
.ell ellipse { fill: none; stroke: #ee4444; stroke-width: 2.5; }
```
